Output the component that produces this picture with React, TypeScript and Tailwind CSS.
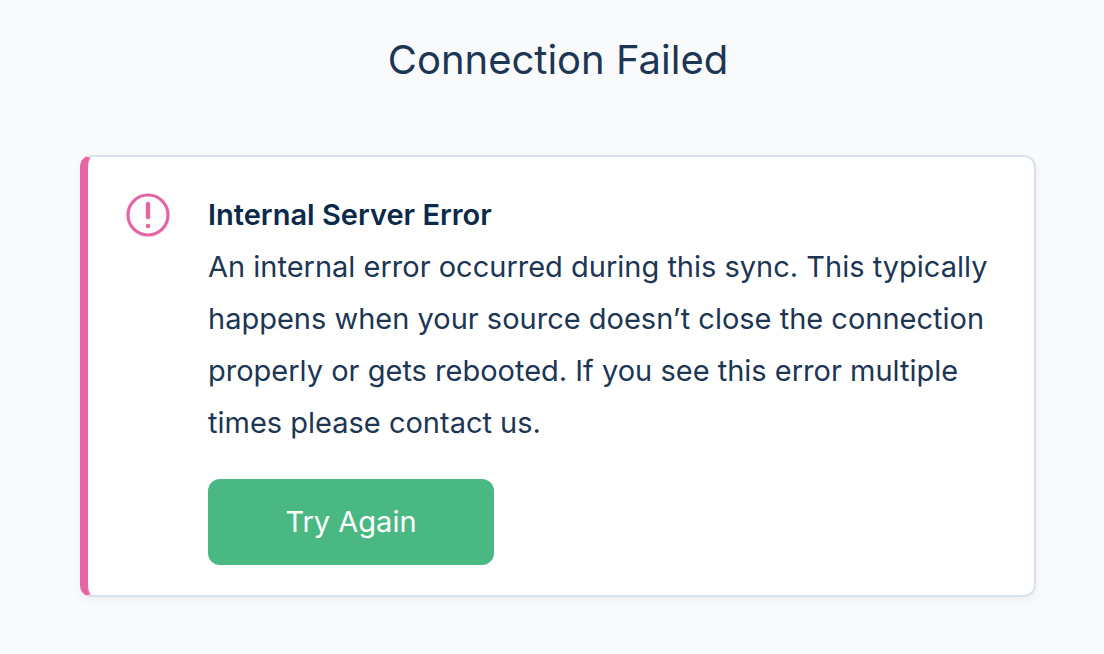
export default function App() {
  return (
    <main className="flex min-h-screen flex-col items-center bg-[#f9fafc] pt-8 pr-[68px] pb-14 pl-20 font-['Inter','Liberation_Sans',sans-serif] text-[#1c3654]">
      <h1 className="text-center text-[40px] leading-[56px]">Connection Failed</h1>
      <section
        role="alert"
        className="mt-[67px] flex w-full overflow-hidden rounded-xl border-2 border-l-8 border-[#d9e2ec] border-l-[#e464a4] bg-white pt-8 pr-8 pb-[30px] pl-[38px] shadow-[0_4px_8px_rgba(28,54,84,0.05)]"
      >
        <svg viewBox="0 0 44 44" className="mt-1 size-11 shrink-0" fill="none" stroke="#e464a4" aria-hidden="true">
          <circle cx="22" cy="22" r="20" strokeWidth="3.2" />
          <path d="M22 11v13" strokeWidth="4.4" strokeLinecap="round" />
          <circle cx="22" cy="33" r="2.3" fill="#e464a4" stroke="none" />
        </svg>
        <div className="ml-[38px] flex-1">
          <h2 className="text-[29px] leading-[52px] font-semibold text-[#0b2a4a]">Internal Server Error</h2>
          <p className="text-[29px] leading-[52px]">
            An internal error occurred during this sync. This typically happens when your source doesn’t close the
            connection properly or gets rebooted. If you see this error multiple times please contact us.
          </p>
          <button type="button" className="mt-[30px] h-[86px] w-[286px] rounded-xl bg-[#4ab883] text-[29px] text-white">
            Try Again
          </button>
        </div>
      </section>
    </main>
  );
}
